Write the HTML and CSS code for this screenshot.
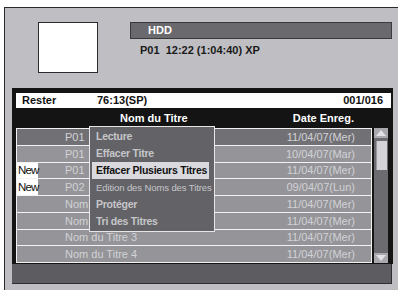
FILE: index.html
```html
<!DOCTYPE html>
<html lang="fr">
<head>
  <meta charset="UTF-8" />
  <title>Liste des Titres</title>
  <link rel="stylesheet" href="styles.css">
</head>
<body>
  <div class="screen">
    <div class="top">
      <div class="thumb"></div>
      <div class="info">
        <div class="media-bar">HDD</div>
        <div class="media-line">P01&nbsp;&nbsp;12:22 (1:04:40) XP</div>
      </div>
    </div>

    <div class="panel">
      <div class="status-row">
        <span class="st-label">Rester</span>
        <span class="st-time">76:13(SP)</span>
        <span class="st-count">001/016</span>
      </div>
      <div class="head-row">
        <span class="h-title">Nom du Titre</span>
        <span class="h-date">Date Enreg.</span>
      </div>
      <div class="list-wrap">
        <div class="list">
          <div class="row current"><span class="tag"></span><span class="title">P01</span><span class="date">11/04/07(Mer)</span></div>
          <div class="row"><span class="tag"></span><span class="title">P01</span><span class="date">10/04/07(Mar)</span></div>
          <div class="row"><span class="tag new">New</span><span class="title">P01</span><span class="date">11/04/07(Mer)</span></div>
          <div class="row"><span class="tag new">New</span><span class="title">P02</span><span class="date">09/04/07(Lun)</span></div>
          <div class="row"><span class="tag"></span><span class="title">Nom du Titre 1</span><span class="date">11/04/07(Mer)</span></div>
          <div class="row"><span class="tag"></span><span class="title">Nom du Titre 2</span><span class="date">11/04/07(Mer)</span></div>
          <div class="row"><span class="tag"></span><span class="title">Nom du Titre 3</span><span class="date">11/04/07(Mer)</span></div>
          <div class="row"><span class="tag"></span><span class="title">Nom du Titre 4</span><span class="date">11/04/07(Mer)</span></div>
        </div>
        <div class="scrollbar">
          <div class="arrow">
            <svg width="10" height="6" viewBox="0 0 10 6"><polygon points="0,6 5,0 10,6" fill="#e2e2e6"/></svg>
          </div>
          <div class="thumb-bar"></div>
          <div class="track-fill"></div>
          <div class="arrow">
            <svg width="10" height="6" viewBox="0 0 10 6"><polygon points="0,0 10,0 5,6" fill="#e2e2e6"/></svg>
          </div>
        </div>
      </div>

      <div class="menu">
        <div class="menu-item">Lecture</div>
        <div class="menu-item">Effacer Titre</div>
        <div class="menu-item active">Effacer Plusieurs Titres</div>
        <div class="menu-item small">Edition des Noms des Titres</div>
        <div class="menu-item">Protéger</div>
        <div class="menu-item">Tri des Titres</div>
      </div>
    </div>

    <div class="footer"></div>
  </div>
</body>
</html>
```

FILE: styles.css
```css
html, body {
  margin: 0;
  height: 290px;
  overflow: hidden;
}
body {
  background: #fff;
  font-family: 'Liberation Sans', Arial, sans-serif;
  font-size: 11px;
  color: #111;
}
.screen {
  margin: 7px 0 0 4px;
  height: 283px;
  border-top: 1px solid #2a2a2c;
  border-left: 1px solid #2a2a2c;
  background: #bfbfc3;
  padding-top: 14px;
  box-sizing: border-box;
}
.top {
  display: flex;
  height: 66px;
}
.thumb {
  margin-left: 33px;
  width: 58px;
  height: 49px;
  background: #fff;
  border: 1px solid #2a2a2c;
}
.info {
  margin-left: 32px;
  width: 262px;
}
.media-bar {
  height: 15px;
  line-height: 15px;
  background: #6a6a6e;
  border: 1px solid #3a3a3c;
  padding-left: 17px;
  color: #fff;
  font-weight: bold;
}
.media-line {
  margin-top: 4px;
  line-height: 14px;
  padding-left: 10px;
  font-weight: bold;
  color: #1a1a1a;
}
.panel {
  position: relative;
  margin-left: 7px;
  width: 381px;
  background: #141414;
  padding: 5px 2px 1px 4px;
  box-sizing: border-box;
}
.status-row {
  display: flex;
  height: 15px;
  line-height: 15px;
  background: #fff;
  font-weight: bold;
}
.st-label {
  margin-left: 6px;
  width: 75px;
}
.st-time {
  flex: 1;
}
.st-count {
  margin-right: 8px;
}
.head-row {
  display: flex;
  height: 20px;
  line-height: 20px;
  color: #fff;
  font-weight: bold;
}
.h-title {
  margin-left: 104px;
}
.h-date {
  margin-left: auto;
  margin-right: 37px;
}
.list-wrap {
  display: flex;
  gap: 2px;
  height: 135px;
}
.list {
  width: 356px;
  background: #f2f2f2;
  padding: 1px;
  box-sizing: border-box;
  display: grid;
  grid-auto-rows: 1fr;
  gap: 1px;
}
.row {
  display: flex;
  align-items: stretch;
  background: #959599;
  color: #d2d2d6;
}
.row.current {
  background: #717175;
}
.tag {
  width: 21px;
}
.tag.new {
  background: #fff;
  color: #111;
  font-size: 11.5px;
  letter-spacing: -0.8px;
  display: flex;
  align-items: center;
  padding-left: 1px;
  box-sizing: border-box;
}
.title {
  margin-left: 27px;
  display: flex;
  align-items: center;
}
.date {
  margin-left: auto;
  margin-right: 16px;
  display: flex;
  align-items: center;
}
.scrollbar {
  width: 14px;
  display: flex;
  flex-direction: column;
  background: #6c6c70;
}
.arrow {
  height: 10px;
  background: #a9a9ad;
  display: flex;
  align-items: center;
  justify-content: center;
}
.thumb-bar {
  margin: 3px 1px 0 2px;
  height: 29px;
  background: #d3d3d7;
  border-left: 1px solid #9a9a9e;
}
.track-fill {
  flex: 1;
}
.menu {
  position: absolute;
  left: 77px;
  top: 38px;
  width: 126px;
  height: 106px;
  background: #636367;
  border: 1px solid #e6e6e6;
  padding: 1px 0;
  box-sizing: border-box;
}
.menu-item {
  height: 17px;
  line-height: 17px;
  margin: 0 5px 0 2px;
  padding-left: 4px;
  font-size: 10.5px;
  font-weight: bold;
  letter-spacing: -0.25px;
  color: #c6c6ca;
  white-space: nowrap;
}
.menu-item.active {
  background: #dadade;
  color: #111;
}
.menu-item.small {
  font-size: 9.5px;
  font-weight: normal;
  letter-spacing: -0.1px;
}
.footer {
  margin-left: 7px;
  width: 379px;
  height: 19px;
  background: #5d5d61;
  border-bottom: 1px solid #2e2e30;
  border-right: 1px solid #2e2e30;
}
```
